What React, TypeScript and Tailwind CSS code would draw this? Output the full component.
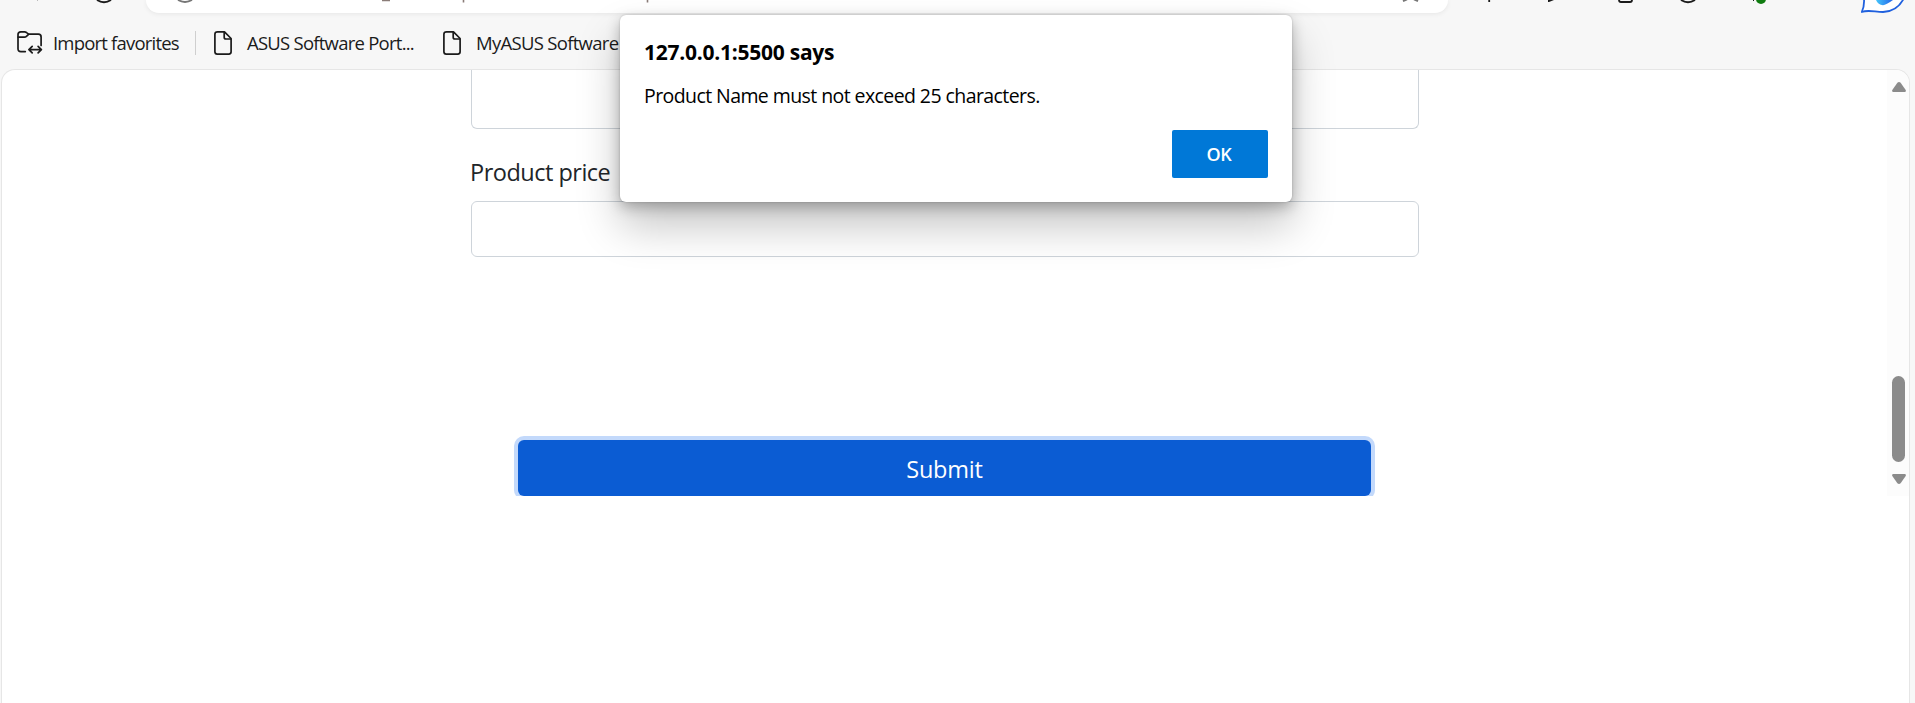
import React from "react";

function DocIcon() {
  return (
    <svg className="h-6 w-[18px] shrink-0" viewBox="0 0 18 24" fill="none" stroke="#1b1b1b" strokeWidth="1.7" strokeLinejoin="round">
      <path d="M3.5 0.9H10.5L17.1 7.5V20.8Q17.1 23.1 14.8 23.1H3.2Q0.9 23.1 0.9 20.8V3.2Q0.9 0.9 3.5 0.9Z" />
      <path d="M10.2 1V6.2Q10.2 8 12 8H17" />
    </svg>
  );
}

function ImportIcon() {
  return (
    <svg className="h-6 w-[26px] shrink-0" viewBox="0 0 26 24" fill="none" stroke="#1b1b1b" strokeWidth="1.7" strokeLinecap="round" strokeLinejoin="round">
      <path d="M8.3 20.6H3.8Q1 20.6 1 17.8V3.6Q1 0.9 3.8 0.9H7.6Q8.7 0.9 9.6 1.7L11.5 3.2H21.4Q24.1 3.2 24.1 6V14.5" />
      <path d="M1.2 6.2H7.4Q8.6 6.2 9.4 5.4L11.6 3.3" />
      <path d="M12.2 18.6H24M15.2 15.3L11.9 18.6L15.2 21.9M21.1 15.3L24.4 18.6L21.1 21.9" />
    </svg>
  );
}

function Toolbar() {
  return (
    <div className="flex h-[13px] items-start">
      <svg className="h-[13px] w-[146px] shrink-0" viewBox="0 0 146 13" fill="none">
        <path d="M37.5 0V1" stroke="#bbb" />
        <path d="M97 0Q104 4.5 111 0" stroke="#1b1b1b" strokeWidth="2" />
      </svg>
      <div className="h-[13px] w-[1302px] shrink-0 rounded-b-[26px] bg-white shadow-[0_1px_5px_rgba(0,0,0,0.07)]">
        <svg className="h-[13px] w-[1302px]" viewBox="0 0 1302 13" fill="none">
          <path d="M32 0Q39 4 46 0" stroke="#767676" strokeWidth="2" />
          <path d="M236 0.4H244M317.5 0V2.5M501.5 0V2.5" stroke="#8a7c78" strokeWidth="1.6" />
          <path d="M1257 1.2L1261 -0.6M1268 -0.6L1272 1.2" stroke="#767676" strokeWidth="2" />
        </svg>
      </div>
      <svg className="h-4 w-[467px] shrink-0" viewBox="1448 0 467 16" fill="none">
        <defs>
          <linearGradient id="blob" x1="0" x2="1" y1="0" y2="0">
            <stop offset="0" stopColor="#45c6fb" />
            <stop offset="1" stopColor="#2464e8" />
          </linearGradient>
        </defs>
        <path d="M1489.2 0V2" stroke="#1b1b1b" strokeWidth="1.8" />
        <path d="M1548 0H1554L1549 2H1548Z" fill="#1b1b1b" />
        <path d="M1619 0Q1619 2 1621 2H1630Q1632 2 1632 0" stroke="#1b1b1b" strokeWidth="1.8" />
        <path d="M1681 0Q1688 4.5 1695 0" stroke="#1b1b1b" strokeWidth="2" />
        <path d="M1753.5 0V1" stroke="#1b1b1b" />
        <circle cx="1761" cy="-1" r="5" fill="#107c10" />
        <path d="M1864 -1Q1864.5 6 1861.8 12C1868 9.5 1875 12 1883 12Q1897 11.5 1903.5 -1" fill="#fff" stroke="#1f60de" strokeWidth="1.8" strokeLinejoin="round" />
        <path d="M1876 0Q1878 5 1883 5.3Q1886 5 1893 0Z" fill="url(#blob)" />
      </svg>
    </div>
  );
}

function FavoritesBar() {
  return (
    <div className="flex h-14 items-start pl-[17px] pt-[18px] text-[18.5px] leading-[23px] text-[#1b1b1b]">
      <ImportIcon />
      <span className="ml-[10px] w-[142px] whitespace-nowrap tracking-[-0.8px]">Import favorites</span>
      <div className="h-6 w-px bg-[#cfcfcf]" />
      <div className="ml-[18px]"><DocIcon /></div>
      <span className="ml-[15px] w-[196px] whitespace-nowrap tracking-[-0.75px]">ASUS Software Port...</span>
      <DocIcon />
      <span className="ml-[15px] whitespace-nowrap tracking-[-0.7px]">MyASUS Software</span>
    </div>
  );
}

function Scrollbar() {
  return (
    <div className="flex h-[426px] w-[22px] shrink-0 flex-col items-center bg-[#fcfcfc] pl-px pt-3">
      <svg className="h-[10px] w-[14px]" viewBox="0 0 14 10" fill="#8b8b8b">
        <path d="M5.4 0.7Q7 -0.6 8.6 0.7L13.7 8Q14.4 10 12.6 10H1.4Q-0.4 10 0.3 8Z" />
      </svg>
      <div className="mt-[284px] h-[86px] w-[13px] rounded-full bg-[#8b8b8b]" />
      <svg className="mt-3 h-[10px] w-[14px] rotate-180" viewBox="0 0 14 10" fill="#8b8b8b">
        <path d="M5.4 0.7Q7 -0.6 8.6 0.7L13.7 8Q14.4 10 12.6 10H1.4Q-0.4 10 0.3 8Z" />
      </svg>
    </div>
  );
}

function Dialog() {
  return (
    <div className="absolute left-[620px] top-[15px] flex h-[187px] w-[672px] flex-col rounded-[6px] bg-white px-6 pt-6 text-black shadow-[0_0_2px_rgba(0,0,0,0.22),0_24px_44px_rgba(0,0,0,0.23),0_5px_14px_rgba(0,0,0,0.25)]">
      <h1 className="h-[27px] whitespace-nowrap text-[21px] font-bold leading-[27px] tracking-[-0.25px]">127.0.0.1:5500 says</h1>
      <p className="mt-4 h-[27px] whitespace-nowrap text-[19.5px] leading-[27px] tracking-[-0.58px]">Product Name must not exceed 25 characters.</p>
      <button className="mt-[21px] h-12 w-24 self-end rounded-[2px] bg-[#0078d7] pr-[2px] text-[18px] font-semibold tracking-[-0.3px] text-white">OK</button>
    </div>
  );
}

export default function App() {
  return (
    <div className="relative flex h-[703px] w-[1915px] flex-col overflow-hidden bg-[#f7f7f7] font-['Open_Sans','Noto_Sans',sans-serif]">
      <Toolbar />
      <FavoritesBar />
      <div className="ml-px flex h-[634px] w-[1909px] shrink-0 overflow-hidden rounded-t-[14px] border border-b-0 border-[#e6e6e6] bg-white">
        <main className="flex h-[426px] w-[1885px] shrink-0 flex-col overflow-hidden pl-[469px] text-[#212529]">
          <div className="h-[59px] w-[948px] shrink-0 rounded-b-[6px] border border-t-0 border-[#ced4da]" />
          <label className="mt-[25px] -ml-px flex h-9 w-[948px] items-center text-[23.5px] leading-9 tracking-[-0.5px]">Product price</label>
          <input className="mt-[11px] h-14 w-[948px] shrink-0 rounded-[6px] border border-[#ced4da] bg-white" />
          <button className="ml-[47px] mt-[183px] h-14 w-[853px] shrink-0 rounded-[6px] bg-[#0b5cd3] pt-[3px] text-[23.5px] tracking-[-0.2px] text-white shadow-[0_0_0_4px_#c3d9fb]">Submit</button>
        </main>
        <Scrollbar />
      </div>
      <Dialog />
    </div>
  );
}
